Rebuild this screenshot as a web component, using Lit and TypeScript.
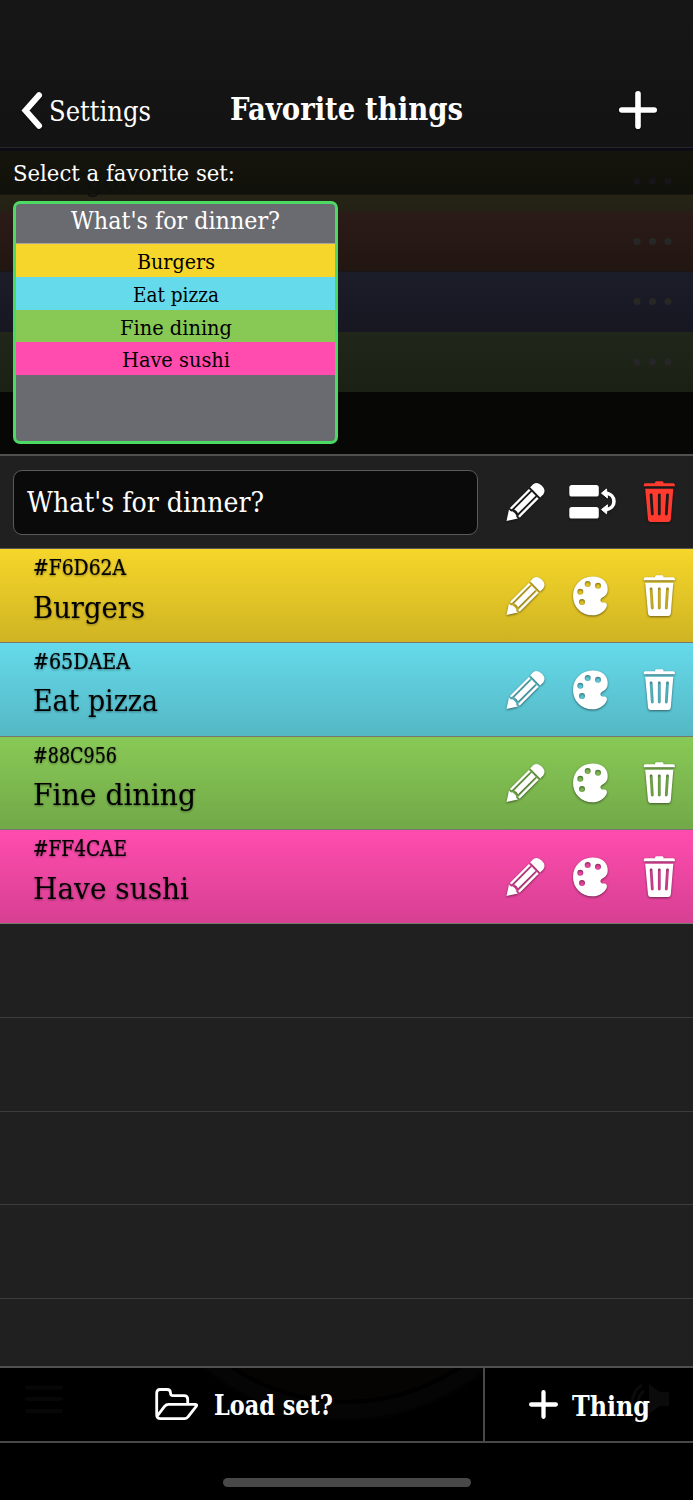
import { LitElement, html, svg, css } from "lit";
import { customElement } from "lit/decorators.js";

interface Thing {
  name: string;
  color: string;
  nameWidth: number;
  hexWidth: number;
  previewWidth: number;
}

const things: Thing[] = [
  { name: "Burgers", color: "#F6D62A", nameWidth: 112, hexWidth: 93, previewWidth: 78 },
  { name: "Eat pizza", color: "#65DAEA", nameWidth: 125, hexWidth: 97, previewWidth: 86 },
  { name: "Fine dining", color: "#88C956", nameWidth: 163, hexWidth: 84, previewWidth: 112 },
  { name: "Have sushi", color: "#FF4CAE", nameWidth: 156, hexWidth: 94, previewWidth: 108 },
];

// One line of slab text, fitted to a fixed measure.
const label = (text: string, width: number, size: number, cls = "") => html`
  <svg class="label ${cls}" width=${width} height=${size} role="text">
    <text x="0" y=${size * 0.86} font-size=${size} textLength=${width} lengthAdjust="spacingAndGlyphs">${text}</text>
  </svg>
`;

const pencil = html`<svg class="icon" width="40" height="40" viewBox="0 0 40 40">
  <g transform="translate(0.5 39) rotate(-45)" fill="currentColor">
    <path d="M0 0 L9.8 -6.3 Q9.4 -3.2 11 -2.8 Q12 0 11 2.8 Q9.4 3.2 9.8 6.3 Z" />
    <path d="M12 -6.9 H38.5 V-4.5 H12.8 Q10.8 -4.9 12 -6.9Z" />
    <path d="M13.6 -2.7 H38.500 V2.7 H13.6 Q14.6 0 13.6 -2.7Z" />
    <path d="M12 6.9 H38.5 V4.5 H12.8 Q10.8 4.9 12 6.9Z" />
    <path d="M40.5 -7.1 H45 Q50 -6.400 50 0 Q50 6.400 45 7.1 H40.5Z" />
  </g>
</svg>`;

const palette = html`<svg class="icon" width="35" height="40" viewBox="0 0 35 40">
  <path fill="currentColor" fill-rule="evenodd" d="M19.5 .5C30 .5 34.7 6.500 34.7 13C34.700 18.500 32 20 28.800 22C26.500 23.500 27.300 26.800 30.300 26.600C33 26.200 34.800 28.500 33.600 31C31 36 26 39.300 19.500 39.300C8 39.300 0 30.500 0 20C0 9 8.500 .5 19.500 .5Z
    M11.700 8a3 3 0 1 0 6 0a3 3 0 1 0-6 0Z M22 9.700a3 3 0 1 0 6 0a3 3 0 1 0-6 0Z
    M4.300 15.700a3 3 0 1 0 6 0a3 3 0 1 0-6 0Z M6 26a3 3 0 1 0 6 0a3 3 0 1 0-6 0Z" />
</svg>`;

const trash = html`<svg class="icon" width="33" height="42" viewBox="0 0 33 42">
  <path fill="currentColor" d="M2 2.300H12V1.500Q12.300 .2 13.500 .2H19Q20.300 .2 20.500 1.500V2.300H30.500Q32 2.500 32 5.300H.7Q.5 2.500 2 2.300Z" />
  <path fill="currentColor" fill-rule="evenodd" d="M2.200 7.800H30.300L27.800 38.500Q27.500 41 25 41H7.800Q5.300 41 5 38.500Z
    M6.700 14a1.400 1.400 0 0 1 2.800 0L10.700 33a1.400 1.400 0 0 1-2.800 0Z
    M14.900 14a1.400 1.400 0 0 1 2.800 0V33a1.400 1.400 0 0 1-2.800 0Z
    M23.100 14a1.400 1.400 0 0 1 2.800 0L24.700 33a1.400 1.400 0 0 1-2.800 0Z" />
</svg>`;

const swap = html`<svg class="icon" width="47" height="40" viewBox="0 0 47 40">
  <g fill="currentColor">
    <rect x=".3" y="3" width="29.500" height="11.500" rx="2.600" />
    <rect x=".3" y="25" width="29.500" height="11.500" rx="2.600" />
    <path stroke="currentColor" stroke-linejoin="round" d="M32.500 11.200L37.500 7L38.500 16Z" />
    <path stroke="currentColor" stroke-linejoin="round" d="M32.500 27.500L38.500 22.800L37.500 31.800Z" />
  </g>
  <path fill="none" stroke="currentColor" stroke-width="3.600" d="M36.500 11.300C47.800 11.800 47.800 27 36.500 27.400" />
</svg>`;

const folder = html`<svg class="icon" width="44" height="33" viewBox="0 0 44 33">
  <path fill="none" stroke="currentColor" stroke-width="2.800" stroke-linejoin="round" stroke-linecap="round"
    d="M1.900 28.500L9.500 18.300Q11.200 16.300 13.500 16.300H40Q42.500 16.300 41.200 18.300L33 28.800Q31.500 30.600 29.500 30.600H5.500Q1.700 30.600 1.700 27V5Q1.700 1.500 5 1.500H12Q15.500 1.500 15.500 5Q15.500 7.700 18 7.700H29Q32.700 7.700 32.700 11.300V16" />
</svg>`;

const plus = (size: number, weight: number) => html`<svg class="icon" width=${size} height=${size}>
  <path fill="none" stroke="currentColor" stroke-linecap="round" stroke-width=${weight}
    d="M${size / 2} ${weight / 2}V${size - weight / 2}M${weight / 2} ${size / 2}H${size - weight / 2}" />
</svg>`;

@customElement("app-root")
export class AppRoot extends LitElement {
  static styles = css`
    :host {
      display: flex;
      flex-direction: column;
      width: 693px;
      height: 1500px;
      overflow: hidden;
      background: #000;
      color: #fff;
      font-family: "DejaVu Serif Condensed", "DejaVu Serif", serif;
    }
    * { box-sizing: border-box; }
    svg { display: block; flex: none; }
    .label { overflow: visible; fill: currentColor; }
    .bold { font-weight: 700; }
    .icon { overflow: visible; filter: drop-shadow(0 1.500px 1px rgba(0, 0, 0, 0.5)); }

    header {
      display: grid;
      grid-template-columns: 230px 1fr 56px;
      align-items: center;
      height: 151px;
      padding: 72px 18px 0 0;
      background: linear-gradient(#161616, #131313);
      border-bottom: 3px solid #0d0c14;
      box-shadow: inset 0 -1px #26262b;
    }
    .back { display: flex; align-items: center; gap: 5px; padding: 1px 0 0 21px; }
    .back .label { margin-top: 1px; }
    header .title { margin-top: -3px; }

    .sets { position: relative; height: 303px; padding: 10px 13px 0; background: #070706; }
    .ghost { position: absolute; left: 0; top: 0; }
    .sets > .caption { position: relative; }
    .card {
      position: relative;
      display: flex;
      flex-direction: column;
      width: 325px;
      height: 243px;
      margin-top: 17px;
      overflow: hidden;
      border: 3px solid #4cd964;
      border-radius: 7px;
      background: #6a6b70;
    }
    .card-title {
      display: flex;
      justify-content: center;
      height: 40px;
      padding-top: 3px;
      border-bottom: 1px solid #aaa69a;
    }
    .preview {
      display: flex;
      justify-content: center;
      height: 32.800px;
      padding-top: 7px;
      color: #000;
    }

    .editor {
      display: grid;
      grid-template-columns: 493px 63px 74px 33px;
      align-items: center;
      height: 95px;
      padding-left: 13px;
      background: #202020;
      border-top: 2px solid #505050;
      border-bottom: 1px solid #555;
    }
    .field {
      display: flex;
      align-items: center;
      width: 465px;
      height: 65px;
      padding: 0 0 1px 13px;
      border: 1px solid #5a5a5a;
      border-radius: 9px;
      background: #0a0a0a;
    }
    .danger { color: #ff3b30; }

    .list { flex: none; height: 817px; overflow: hidden; background: #202020; }
    .row {
      display: grid;
      grid-template-columns: 472px 67px 70px 33px;
      align-items: center;
      height: 93.750px;
      padding: 1px 0 0 34px;
      border-bottom: 1px solid #3c3c3c;
    }
    .thing { border-bottom-color: #77786c; }
    .names {
      display: flex;
      flex-direction: column;
      gap: 14px;
      align-self: start;
      padding-top: 6px;
      margin-left: -1px;
      color: #000;
    }
    .names .label { filter: drop-shadow(0 1px 1px rgba(0, 0, 0, 0.4)); }
    .hex { stroke: #000; stroke-width: 0.200px; }

    footer {
      position: relative;
      display: grid;
      grid-template-columns: 483px 1fr;
      height: 77px;
      border-top: 2px solid #505050;
      border-bottom: 2px solid #484848;
    }
    .action { position: relative; display: flex; align-items: center; }
    .load { gap: 15px; padding-left: 155px; }
    .add { gap: 14px; padding-left: 44px; border-left: 2px solid #484848; }
    .add .label { margin-top: 3px; }
    .home { width: 248px; height: 9px; margin: 35px auto 0; border-radius: 5px; background: #484848; }
  `;

  render() {
    const bands = [
      [0, 43.5, "#15150d", "#11110b"],
      [43.5, 17.5, "#272417", "#232015"],
      [61, 59.5, "#2b1b19", "#221611"],
      [120.5, 60.5, "#1b1d29", "#161721"],
      [181, 60, "#20271a", "#1b2014"],
    ] as const;
    const dots = [[30, "#15151a"], [90.500, "#262828"], [150.500, "#282724"], [211, "#262528"]] as const;

    return html`
      <header>
        <div class="back">
          <svg class="icon" width="23" height="37" viewBox="0 0 23 37">
            <path fill="none" stroke="currentColor" stroke-width="6" stroke-linecap="round" stroke-linejoin="miter" d="M18 3.200L4.500 18.500L18 33.800" />
          </svg>
          ${label("Settings", 102, 28)}
        </div>
        <div class="title">${label("Favorite things", 233, 32.500, "bold")}</div>
        ${plus(38, 5.6)}
      </header>

      <section class="sets">
        <svg class="ghost" width="693" height="303">
          <defs>
            ${bands.map(([, , a, b], i) => svg`<linearGradient id="band${i}" x2="0" y2="1">
              <stop stop-color=${a} /><stop offset="1" stop-color=${b} /></linearGradient>`)}
          </defs>
          ${bands.map(([y, h], i) => svg`<rect y=${y} width="693" height=${h} fill="url(#band${i})" />`)}
          <text x="34" y="39" font-size="31" textLength="112" lengthAdjust="spacingAndGlyphs" fill="#0e0f0f">Burgers</text>
          ${dots.map(([y, c]) => [637, 652.5, 668].map((x) => svg`<circle cx=${x} cy=${y} r="3.600" fill=${c} />`))}
        </svg>
        <div class="caption">${label("Select a favorite set:", 222, 23)}</div>
        <div class="card">
          <div class="card-title">${label("What's for dinner?", 209, 25)}</div>
          ${things.map((t) => html`<div class="preview" style="background:${t.color}">${label(t.name, t.previewWidth, 21)}</div>`)}
        </div>
      </section>

      <section class="editor">
        <div class="field">${label("What's for dinner?", 237, 27.500)}</div>
        ${pencil}${swap}<span class="danger">${trash}</span>
      </section>

      <section class="list">
        ${things.map((t) => html`
          <div class="row thing" style="background:linear-gradient(rgba(0,0,0,0), rgba(0,0,0,.16)), ${t.color}">
            <div class="names">
              ${label(t.color, t.hexWidth, 21.500, "hex")}
              ${label(t.name, t.nameWidth, 30.500)}
            </div>
            ${pencil}${palette}${trash}
          </div>`)}
        ${[0, 1, 2, 3, 4].map(() => html`<div class="row"></div>`)}
      </section>

      <footer>
        <svg class="ghost" width="693" height="73">
          <circle cx="346" cy="-170" r="222" fill="#050505" stroke="#020202" stroke-width="3" />
          <circle cx="346" cy="-170" r="204" fill="#060403" stroke="#000" stroke-width="4" />
          <path stroke="#070707" stroke-width="4" stroke-linecap="round" d="M27 19.500H61M27 31H61M27 43H61" />
          <path fill="#0b0b0b" d="M649 16V46L660 38H669V24H660Z" />
          <path fill="none" stroke="#0b0b0b" stroke-width="3" d="M642 17Q632 23 632 38M644 23Q638 27 638 36" />
        </svg>
        <div class="action load">${folder}${label("Load set?", 119, 27.500, "bold")}</div>
        <div class="action add">${plus(29, 4.3)}${label("Thing", 78, 27.500, "bold")}</div>
      </footer>
      <div class="home"></div>
    `;
  }
}
